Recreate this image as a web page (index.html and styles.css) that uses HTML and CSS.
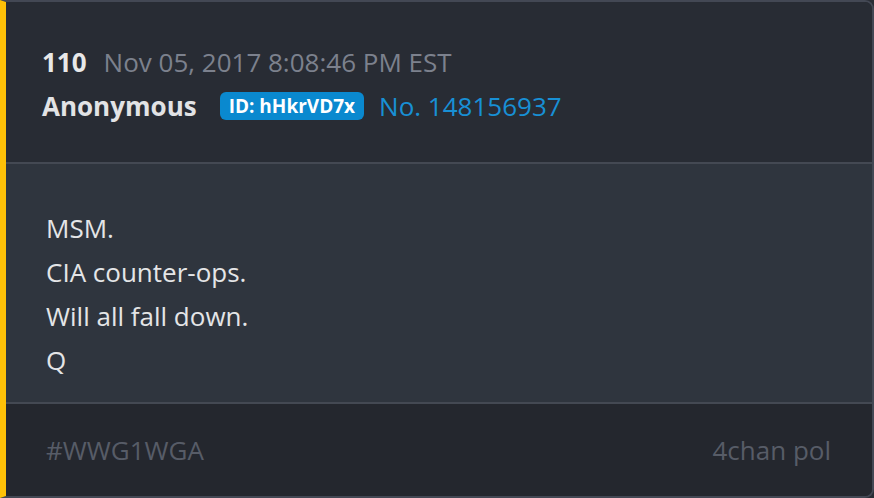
FILE: index.html
```html
<!DOCTYPE html>
<html lang="en">
<head>
  <meta charset="UTF-8">
  <title>Post 110</title>
  <link rel="stylesheet" href="styles.css">
</head>
<body>
  <div class="post">
    <div class="post-head">
      <div class="meta-row">
        <span class="post-num">110</span>
        <span class="post-date">Nov 05, 2017 8:08:46 PM EST</span>
      </div>
      <div class="meta-row">
        <span class="author">Anonymous</span>
        <span class="id-badge">ID: hHkrVD7x</span>
        <a class="post-link" href="#">No. 148156937</a>
      </div>
    </div>

    <div class="post-body">
      <p>MSM.</p>
      <p>CIA counter-ops.</p>
      <p>Will all fall down.</p>
      <p>Q</p>
    </div>

    <div class="post-foot">
      <span class="tag">#WWG1WGA</span>
      <span class="source">4chan pol</span>
    </div>
  </div>
</body>
</html>
```

FILE: styles.css
```css
html, body {
  margin: 0;
  padding: 0;
  background: #292d35;
}
body {
  font-family: "Open Sans", "Noto Sans", sans-serif;
  font-size: 26px;
  color: #e4e5e7;
}
.post {
  width: 874px;
  height: 498px;
  box-sizing: border-box;
  border: 2px solid #434854;
  border-left: 6px solid #ffc107;
  border-radius: 0 9px 9px 0;
  overflow: hidden;
  display: flex;
  flex-direction: column;
}
.post-head {
  background: #282c34;
  height: 162px;
  box-sizing: border-box;
  padding: 38px 36px 0;
  border-bottom: 2px solid #444953;
}
.meta-row {
  display: flex;
  align-items: center;
  height: 44px;
}
.post-num {
  font-weight: bold;
  color: #e8e8e8;
  margin-right: 17px;
}
.post-date {
  color: #7c818d;
}
.author {
  font-weight: bold;
  color: #e2e3e5;
  margin-right: 23px;
}
.id-badge {
  background: #0a89cf;
  color: #fff;
  font-size: 19px;
  font-weight: bold;
  padding: 0 9px;
  height: 28px;
  line-height: 28px;
  border-radius: 6px;
  margin-right: 15px;
}
.post-link {
  color: #1890d5;
  text-decoration: none;
}
.post-body {
  background: #2f353e;
  height: 240px;
  box-sizing: border-box;
  padding: 42px 40px 0;
  border-bottom: 2px solid #444953;
}
.post-body p {
  margin: 0;
  line-height: 44px;
}
.post-foot {
  flex: 1;
  background: #24272e;
  display: flex;
  justify-content: space-between;
  align-items: center;
  padding: 0 41px 0 40px;
  color: #575c67;
}
```
